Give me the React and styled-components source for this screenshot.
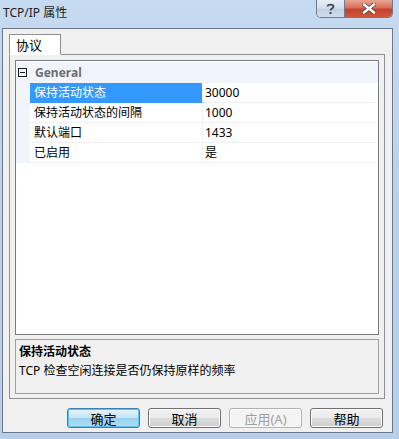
import React from 'react';
import styled, { createGlobalStyle } from 'styled-components';

const GlobalStyle = createGlobalStyle`
  html, body {
    margin: 0;
    padding: 0;
    background: #bcd4ee;
  }
  body {
    font-family: "Noto Sans", "Noto Sans CJK SC", sans-serif;
    font-size: 12px;
    color: #000;
  }
`;

const Window = styled.div`
  width: 399px;
  height: 439px;
  display: flex;
  flex-direction: column;
  background: linear-gradient(180deg, #c6dbf1 0%, #bad2ec 40%, #b6cfea 100%);
  overflow: hidden;
`;

const TitleBar = styled.div`
  height: 28px;
  display: flex;
  align-items: flex-start;
  justify-content: space-between;
  flex-shrink: 0;
`;

const Title = styled.div`
  padding: 5px 0 0 3px;
  font-size: 12px;
  line-height: 16px;
  color: #1e1e1e;
`;

const CaptionButtons = styled.div`
  display: flex;
  margin-right: 6px;
  border: 1px solid #6d7b8d;
  border-top: none;
  border-radius: 0 0 5px 5px;
  overflow: hidden;
  height: 17px;
`;

const CaptionButton = styled.div`
  width: ${(p) => p.$w}px;
  height: 17px;
  display: flex;
  align-items: center;
  justify-content: center;
  background: ${(p) =>
    p.$close
      ? 'linear-gradient(180deg, #e8a593 0%, #d9705b 45%, #c5412b 55%, #d0573e 100%)'
      : 'linear-gradient(180deg, #e6edf6 0%, #d5e0ed 45%, #c2d1e3 55%, #cfdcec 100%)'};
  border-left: ${(p) => (p.$close ? '1px solid #6d7b8d' : 'none')};
`;

const Client = styled.div`
  flex: 1;
  margin: 0 6px 6px 2px;
  border: 1px solid #6b7789;
  background: #f0f0f0;
  padding: 5px 8px 0 6px;
  display: flex;
  flex-direction: column;
`;

const TabStrip = styled.div`
  display: flex;
  height: 21px;
  margin-bottom: -1px;
  position: relative;
  z-index: 1;
`;

const Tab = styled.div`
  width: 52px;
  height: 21px;
  box-sizing: border-box;
  border: 1px solid #8d8f94;
  border-bottom: 1px solid #fff;
  background: #fff;
  font-size: 13px;
  line-height: 20px;
  padding-left: 6px;
`;

const TabPage = styled.div`
  width: 376px;
  height: 345px;
  box-sizing: border-box;
  border: 1px solid #8d8f94;
  padding: 5px 5px 0 5px;
  display: flex;
  flex-direction: column;
  gap: 4px;
`;

const Grid = styled.div`
  height: 275px;
  box-sizing: border-box;
  border: 1px solid #787c82;
  background: #fff;
  display: flex;
  flex-direction: column;
`;

const CategoryRow = styled.div`
  height: 21px;
  display: flex;
  align-items: center;
  background: #f1f5fb;
  margin-top: 1px;
`;

const ToggleBox = styled.div`
  width: 9px;
  height: 9px;
  border: 1px solid #1a1a1a;
  box-sizing: border-box;
  margin: 0 8px 0 2px;
  display: flex;
  align-items: center;
  justify-content: center;
  &::after {
    content: '';
    width: 5px;
    height: 1px;
    background: #1a1a1a;
  }
`;

const CategoryLabel = styled.div`
  font-weight: bold;
  color: #6d6d6d;
  font-size: 12px;
`;

const Row = styled.div`
  display: flex;
  height: 20px;
`;

const Gutter = styled.div`
  width: 14px;
  background: #f1f5fb;
`;

const NameCell = styled.div`
  width: 173px;
  box-sizing: border-box;
  padding-left: 4px;
  line-height: 19px;
  font-size: 12px;
  border-bottom: 1px solid;
  border-right: 1px solid #f0f0f5;
  background: ${(p) => (p.$selected ? '#3399ff' : '#fff')};
  color: ${(p) => (p.$selected ? '#fff' : '#000')};
  border-bottom-color: ${(p) => (p.$selected ? '#3399ff' : '#f0f0f5')};
`;

const ValueCell = styled.div`
  flex: 1;
  padding-left: 2px;
  line-height: 19px;
  font-size: 12px;
  border-bottom: 1px solid #f0f0f5;
`;

const Description = styled.div`
  height: 55px;
  box-sizing: border-box;
  border: 1px solid #a0a0a0;
  background: #f0f0f0;
  padding: 2px 3px;
  line-height: 19px;
`;

const DescTitle = styled.div`
  font-weight: bold;
`;

const ButtonRow = styled.div`
  display: flex;
  justify-content: flex-end;
  gap: 8px;
  margin-top: 9px;
  padding-right: 1px;
`;

const Button = styled.div`
  width: 73px;
  height: 20px;
  box-sizing: border-box;
  border: 1px solid ${(p) => (p.$default ? '#3c7fb1' : p.$disabled ? '#adb2b5' : '#707070')};
  border-radius: 3px;
  display: flex;
  align-items: center;
  justify-content: center;
  font-size: 13px;
  color: ${(p) => (p.$disabled ? '#a0a0a0' : '#000')};
  background: ${(p) =>
    p.$default
      ? 'linear-gradient(180deg, #e5f4fc 0%, #c4e5f6 50%, #98d1ef 51%, #b3def4 100%)'
      : p.$disabled
      ? '#f4f4f4'
      : 'linear-gradient(180deg, #f2f2f2 0%, #ebebeb 50%, #dddddd 51%, #cfcfcf 100%)'};
  box-shadow: ${(p) => (p.$default ? 'inset 0 0 0 1px #5fc0ea' : 'inset 0 0 0 1px #fcfcfc')};
`;

const rows = [
  { name: '保持活动状态', value: '30000', selected: true },
  { name: '保持活动状态的间隔', value: '1000' },
  { name: '默认端口', value: '1433' },
  { name: '已启用', value: '是' },
];

const HelpGlyph = () => (
  <svg width="9" height="12" viewBox="0 0 9 12">
    <path
      d="M1.5 3.5 C1.5 1 7.5 1 7.5 3.5 C7.5 5.5 4.5 5.5 4.5 7.5"
      fill="none"
      stroke="#3d4a5c"
      strokeWidth="1.8"
    />
    <rect x="3.5" y="9" width="2" height="2" fill="#3d4a5c" />
  </svg>
);

const CloseGlyph = () => (
  <svg width="14" height="11" viewBox="0 0 14 11">
    <path d="M2 1.5 L12 9.5 M12 1.5 L2 9.5" stroke="#4a4a4a" strokeWidth="4" strokeLinecap="square" />
    <path d="M2 1.5 L12 9.5 M12 1.5 L2 9.5" stroke="#ffffff" strokeWidth="2.4" strokeLinecap="square" />
  </svg>
);

const App = () => (
  <>
    <GlobalStyle />
    <Window>
      <TitleBar>
        <Title>TCP/IP 属性</Title>
        <CaptionButtons>
          <CaptionButton $w={27}>
            <HelpGlyph />
          </CaptionButton>
          <CaptionButton $w={47} $close>
            <CloseGlyph />
          </CaptionButton>
        </CaptionButtons>
      </TitleBar>
      <Client>
        <TabStrip>
          <Tab>协议</Tab>
        </TabStrip>
        <TabPage>
          <Grid>
            <CategoryRow>
              <ToggleBox />
              <CategoryLabel>General</CategoryLabel>
            </CategoryRow>
            {rows.map((r) => (
              <Row key={r.name}>
                <Gutter />
                <NameCell $selected={r.selected}>{r.name}</NameCell>
                <ValueCell>{r.value}</ValueCell>
              </Row>
            ))}
          </Grid>
          <Description>
            <DescTitle>保持活动状态</DescTitle>
            <div>TCP 检查空闲连接是否仍保持原样的频率</div>
          </Description>
        </TabPage>
        <ButtonRow>
          <Button $default>确定</Button>
          <Button>取消</Button>
          <Button $disabled>应用(A)</Button>
          <Button>帮助</Button>
        </ButtonRow>
      </Client>
    </Window>
  </>
);

export default App;
